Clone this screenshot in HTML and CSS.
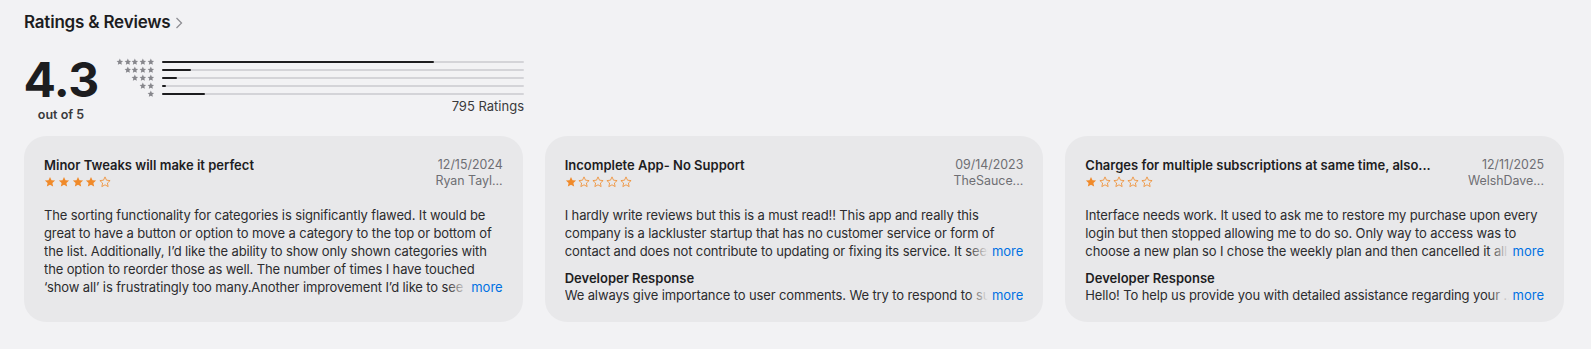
FILE: index.html
```html
<!DOCTYPE html>
<html lang="en">
<head>
<meta charset="utf-8">
<title>Ratings &amp; Reviews</title>
<link rel="stylesheet" href="styles.css">
</head>
<body>
<svg class="defs" width="0" height="0" aria-hidden="true">
  <defs>
    <path id="star" d="M12 1.8l3 6.6 7.2.8-5.4 4.9 1.5 7.1L12 17.6l-6.3 3.6 1.5-7.1L1.8 9.2 9 8.4z"/>
  </defs>
</svg>
<section class="ratings">
  <h2 class="ratings-title">Ratings &amp; Reviews <span class="chev"><svg width="8" height="12" viewBox="0 0 8 12"><path d="M1.5 1l5 5-5 5" fill="none" stroke="#8e8e93" stroke-width="1.3"/></svg></span></h2>

  <div class="summary">
    <div class="score">
      <div class="score-num">4.3</div>
      <div class="score-sub">out of 5</div>
    </div>
    <div class="hist">
      <div class="hist-row">
        <div class="hist-stars"><svg viewBox="0 0 24 24"><use href="#star"/></svg><svg viewBox="0 0 24 24"><use href="#star"/></svg><svg viewBox="0 0 24 24"><use href="#star"/></svg><svg viewBox="0 0 24 24"><use href="#star"/></svg><svg viewBox="0 0 24 24"><use href="#star"/></svg></div>
        <div class="hist-bar"><div class="hist-fill" style="width:75.2%"></div></div>
      </div>
      <div class="hist-row">
        <div class="hist-stars"><svg viewBox="0 0 24 24"><use href="#star"/></svg><svg viewBox="0 0 24 24"><use href="#star"/></svg><svg viewBox="0 0 24 24"><use href="#star"/></svg><svg viewBox="0 0 24 24"><use href="#star"/></svg></div>
        <div class="hist-bar"><div class="hist-fill" style="width:8%"></div></div>
      </div>
      <div class="hist-row">
        <div class="hist-stars"><svg viewBox="0 0 24 24"><use href="#star"/></svg><svg viewBox="0 0 24 24"><use href="#star"/></svg><svg viewBox="0 0 24 24"><use href="#star"/></svg></div>
        <div class="hist-bar"><div class="hist-fill" style="width:4.2%"></div></div>
      </div>
      <div class="hist-row">
        <div class="hist-stars"><svg viewBox="0 0 24 24"><use href="#star"/></svg><svg viewBox="0 0 24 24"><use href="#star"/></svg></div>
        <div class="hist-bar"><div class="hist-fill" style="width:1.2%"></div></div>
      </div>
      <div class="hist-row">
        <div class="hist-stars"><svg viewBox="0 0 24 24"><use href="#star"/></svg></div>
        <div class="hist-bar"><div class="hist-fill" style="width:12.1%"></div></div>
      </div>
      <div class="hist-count">795 Ratings</div>
    </div>
  </div>

  <div class="reviews">
    <article class="card">
      <div class="card-head">
        <div class="card-head-main">
          <h3 class="card-title">Minor Tweaks will make it perfect</h3>
          <div class="card-stars">
            <svg viewBox="0 0 24 24"><use href="#star"/></svg><svg viewBox="0 0 24 24"><use href="#star"/></svg><svg viewBox="0 0 24 24"><use href="#star"/></svg><svg viewBox="0 0 24 24"><use href="#star"/></svg><svg class="empty" viewBox="0 0 24 24"><use href="#star"/></svg>
          </div>
        </div>
        <div class="card-meta">
          <div class="card-date">12/15/2024</div>
          <div class="card-author">Ryan Tayl...</div>
        </div>
      </div>
      <div class="clamp clamp-5">
        <p class="card-text">The sorting functionality for categories is significantly flawed. It would be great to have a button or option to move a category to the top or bottom of the list. Additionally, I’d like the ability to show only shown categories with the option to reorder those as well. The number of times I have touched ‘show all’ is frustratingly too many.Another improvement I’d like to see is a</p>
        <a class="more" href="#">more</a>
      </div>
    </article>

    <article class="card">
      <div class="card-head">
        <div class="card-head-main">
          <h3 class="card-title">Incomplete App- No Support</h3>
          <div class="card-stars">
            <svg viewBox="0 0 24 24"><use href="#star"/></svg><svg class="empty" viewBox="0 0 24 24"><use href="#star"/></svg><svg class="empty" viewBox="0 0 24 24"><use href="#star"/></svg><svg class="empty" viewBox="0 0 24 24"><use href="#star"/></svg><svg class="empty" viewBox="0 0 24 24"><use href="#star"/></svg>
          </div>
        </div>
        <div class="card-meta">
          <div class="card-date">09/14/2023</div>
          <div class="card-author">TheSauce...</div>
        </div>
      </div>
      <div class="clamp clamp-3">
        <p class="card-text">I hardly write reviews but this is a must read!! This app and really this company is a lackluster startup that has no customer service or form of contact and does not contribute to updating or fixing its service. It seems</p>
        <a class="more" href="#">more</a>
      </div>
      <h4 class="dev-title">Developer Response</h4>
      <div class="clamp clamp-1">
        <p class="card-text">We always give importance to user comments. We try to respond to such</p>
        <a class="more" href="#">more</a>
      </div>
    </article>

    <article class="card">
      <div class="card-head">
        <div class="card-head-main">
          <h3 class="card-title">Charges for multiple subscriptions at same time, also...</h3>
          <div class="card-stars">
            <svg viewBox="0 0 24 24"><use href="#star"/></svg><svg class="empty" viewBox="0 0 24 24"><use href="#star"/></svg><svg class="empty" viewBox="0 0 24 24"><use href="#star"/></svg><svg class="empty" viewBox="0 0 24 24"><use href="#star"/></svg><svg class="empty" viewBox="0 0 24 24"><use href="#star"/></svg>
          </div>
        </div>
        <div class="card-meta">
          <div class="card-date">12/11/2025</div>
          <div class="card-author">WelshDave...</div>
        </div>
      </div>
      <div class="clamp clamp-3">
        <p class="card-text">Interface needs work. It used to ask me to restore my purchase upon every login but then stopped allowing me to do so. Only way to access was to choose a new plan so I chose the weekly plan and then cancelled it all</p>
        <a class="more" href="#">more</a>
      </div>
      <h4 class="dev-title">Developer Response</h4>
      <div class="clamp clamp-1">
        <p class="card-text">Hello! To help us provide you with detailed assistance regarding your ...</p>
        <a class="more" href="#">more</a>
      </div>
    </article>
  </div>
</section>
</body>
</html>
```

FILE: styles.css
```css
* { box-sizing: border-box; }

html, body {
  margin: 0;
  padding: 0;
  background: #f2f2f4;
}

body {
  font-family: Inter, "Liberation Sans", Arial, sans-serif;
  color: #1d1d1f;
  width: 1591px;
  height: 349px;
  overflow: hidden;
}

.defs {
  position: absolute;
  width: 0;
  height: 0;
}

.ratings {
  padding: 12px 27px 0 24px;
}

.ratings-title {
  margin: 0;
  font-size: 17px;
  line-height: 20px;
  font-weight: 600;
  letter-spacing: -0.2px;
  display: flex;
  align-items: center;
  gap: 5px;
}

.chev {
  display: inline-flex;
  padding-top: 2px;
}

/* summary */
.summary {
  display: flex;
  align-items: flex-start;
  margin-top: 23px;
}

.score {
  width: 74px;
  display: flex;
  flex-direction: column;
  align-items: center;
}

.score-num {
  font-size: 48px;
  line-height: 50px;
  font-weight: 700;
  letter-spacing: -0.5px;
}

.score-sub {
  font-size: 12.5px;
  line-height: 16px;
  font-weight: 600;
  color: #3a3a3c;
  margin-top: 2px;
}

.hist {
  margin-left: 18px;
  margin-top: 3px;
  width: 408px;
  display: flex;
  flex-direction: column;
}

.hist-row {
  display: flex;
  align-items: center;
  height: 8px;
  gap: 7px;
}

.hist-stars {
  width: 38.5px;
  display: flex;
  justify-content: flex-end;
}

.hist-stars svg {
  width: 7.7px;
  height: 7.7px;
  fill: #87878c;
}

.hist-bar {
  flex: 1;
  height: 2px;
  background: #d4d4d8;
  border-radius: 1px;
}

.hist-fill {
  height: 100%;
  background: #1d1d1f;
  border-radius: 1px;
}

.hist-count {
  text-align: right;
  font-size: 13px;
  line-height: 16px;
  color: #3a3a3c;
}

/* reviews */
.reviews {
  display: grid;
  grid-template-columns: repeat(3, 1fr);
  gap: 22px;
  margin-top: 13px;
}

.card {
  background: #e8e8ea;
  border-radius: 22px;
  height: 186px;
  padding: 20px 20px 0 20px;
}

.card-head {
  display: flex;
  justify-content: space-between;
  gap: 16px;
}

.card-head-main {
  min-width: 0;
}

.card-title {
  margin: 0;
  font-size: 13px;
  line-height: 18px;
  font-weight: 600;
  white-space: nowrap;
  overflow: hidden;
}

.card-stars {
  display: flex;
  gap: 1.8px;
  margin-top: 2px;
}

.card-stars svg {
  width: 12px;
  height: 12px;
  fill: #f08a2a;
}

.card-stars svg.empty {
  fill: none;
  stroke: #f08a2a;
  stroke-width: 1.6;
}

.card-meta {
  text-align: right;
  flex: none;
  font-size: 12.4px;
  line-height: 16px;
  color: #6e6e73;
  padding-top: 1px;
}

.clamp {
  position: relative;
  overflow: hidden;
  font-size: 13px;
  line-height: 18px;
  letter-spacing: -0.12px;
}

.clamp-5 { max-height: 90px; margin-top: 17px; }
.clamp-3 { max-height: 54px; margin-top: 17px; }
.clamp-1 { max-height: 18px; white-space: nowrap; }

.card-text {
  margin: 0;
  color: #2c2c2e;
}

.more {
  position: absolute;
  right: 0;
  bottom: 0;
  padding-left: 24px;
  font-size: 13px;
  letter-spacing: 0;
  color: #0071e3;
  text-decoration: none;
  background: linear-gradient(to right, rgba(232, 232, 234, 0), #e8e8ea 20px);
}

.dev-title {
  margin: 11px 0 0;
  font-size: 13px;
  line-height: 15px;
  font-weight: 600;
}
```
